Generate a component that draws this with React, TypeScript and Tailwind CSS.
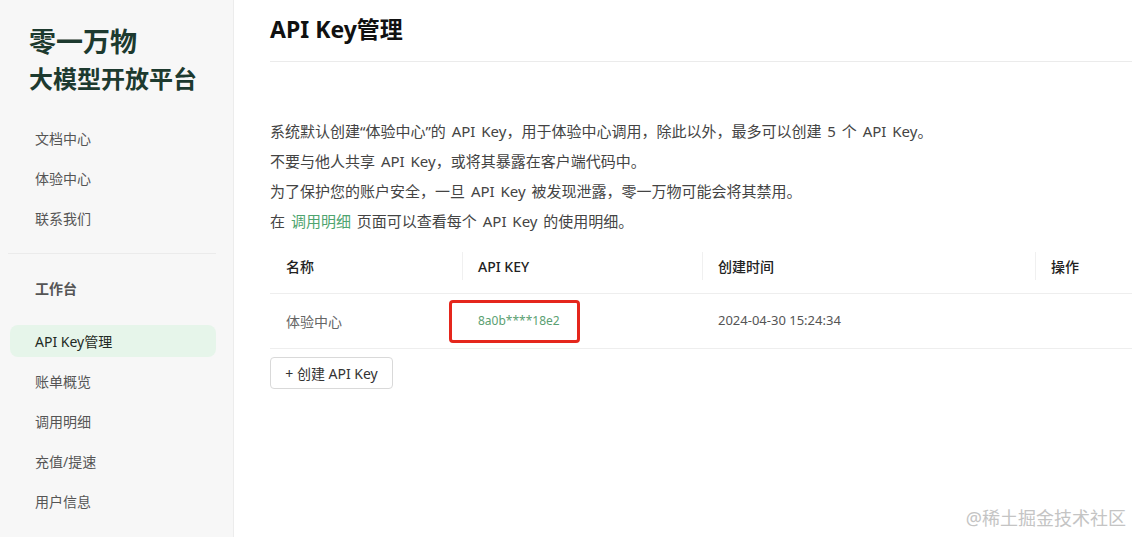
import React from 'react';

const font = { fontFamily: '"Noto Sans", "Noto Sans CJK SC", sans-serif' };

const topLinks = ['文档中心', '体验中心', '联系我们'];
const workLinks = ['API Key管理', '账单概览', '调用明细', '充值/提速', '用户信息'];

function Sidebar() {
   return (
      <aside className="w-[234px] shrink-0 h-full bg-[#f7f7f7] border-r border-[#ececec] flex flex-col">
         <div className="pt-[24px] pl-[29px] text-[#1d3a2f] font-bold">
            <div className="text-[27px] leading-[36px]">零一万物</div>
            <div className="text-[24px] leading-[32px] mt-[3px]">大模型开放平台</div>
         </div>

         <nav className="mt-[23px]">
            {topLinks.map((l) => (
               <div key={l} className="h-[40px] flex items-center pl-[35px] text-[14px] text-[#555]">
                  {l}
               </div>
            ))}
         </nav>

         <div className="mt-[15px] ml-[8px] mr-[17px] h-px bg-[#ebebeb]" />

         <div className="mt-[14px] h-[40px] flex items-center pl-[35px] text-[14px] font-bold text-[#555]">
            工作台
         </div>

         <nav className="mt-[13px]">
            {workLinks.map((l, i) => (
               <div key={l} className="h-[40px] flex items-center ml-[10px] mr-[17px]">
                  <div
                     className={
                        i === 0
                           ? 'w-full h-[32px] rounded-[8px] flex items-center pl-[25px] text-[14px] text-[#1f2a24] bg-[#e6f5ea]'
                           : 'w-full h-[32px] rounded-[8px] flex items-center pl-[25px] text-[14px] text-[#555]'
                     }
                  >
                     {l}
                  </div>
               </div>
            ))}
         </nav>
      </aside>
   );
}

function HeaderCell({ children, sep }: { children: React.ReactNode; sep?: boolean }) {
   return (
      <div className="relative h-[53px] flex items-center pl-[16px] text-[14px] font-medium text-[#222]">
         {sep && <span className="absolute left-0 top-[12px] h-[28px] w-px bg-[#f0f0f0]" />}
         {children}
      </div>
   );
}

export default function App() {
   return (
      <div className="relative flex h-[537px] w-full overflow-hidden bg-white" style={font}>
         <Sidebar />

         <main className="flex-1 pl-[36px]">
            <h1 className="pt-[14px] text-[23px] leading-[30px] font-bold text-[#111]">API Key管理</h1>
            <div className="mt-[17px] h-px bg-[#ebebeb]" />

            <div className="mt-[54px] text-[15px] leading-[30px] text-[#444] [text-spacing-trim:space-all] [word-spacing:2px]">
               <p>系统默认创建“体验中心”的 API Key，用于体验中心调用，除此以外，最多可以创建 5 个 API Key。</p>
               <p>不要与他人共享 API Key，或将其暴露在客户端代码中。</p>
               <p>为了保护您的账户安全，一旦 API Key 被发现泄露，零一万物可能会将其禁用。</p>
               <p>
                  在 <span className="text-[#4fa46f]">调用明细</span> 页面可以查看每个 API Key 的使用明细。
               </p>
            </div>

            <div className="mt-[4px]">
               <div className="grid grid-cols-[192px_240px_333px_1fr] border-b border-[#eeeeee]">
                  <HeaderCell>名称</HeaderCell>
                  <HeaderCell sep>API KEY</HeaderCell>
                  <HeaderCell sep>创建时间</HeaderCell>
                  <HeaderCell sep>操作</HeaderCell>
               </div>
               <div className="grid grid-cols-[192px_240px_333px_1fr] border-b border-[#eeeeee] h-[55px] items-center text-[14px]">
                  <div className="pl-[16px] text-[#666]">体验中心</div>
                  <div className="relative h-full flex items-center pl-[16px] text-[12px] text-[#5b9f72]">
                     8a0b****18e2
                     <span className="absolute left-[-13px] top-[6px] w-[131px] h-[43px] border-[3px] border-[#e5261c] rounded-[4px]" />
                  </div>
                  <div className="pl-[16px] text-[13px] text-[#555]">2024-04-30 15:24:34</div>
                  <div />
               </div>
            </div>

            <button className="mt-[8px] h-[32px] w-[123px] rounded-[4px] border border-[#d9d9d9] bg-white text-[14px] text-[#333]">
               + 创建 API Key
            </button>
         </main>

         <div className="absolute right-[6px] bottom-[5px] text-[18px] text-[#c4c4c4]">@稀土掘金技术社区</div>
      </div>
   );
}
